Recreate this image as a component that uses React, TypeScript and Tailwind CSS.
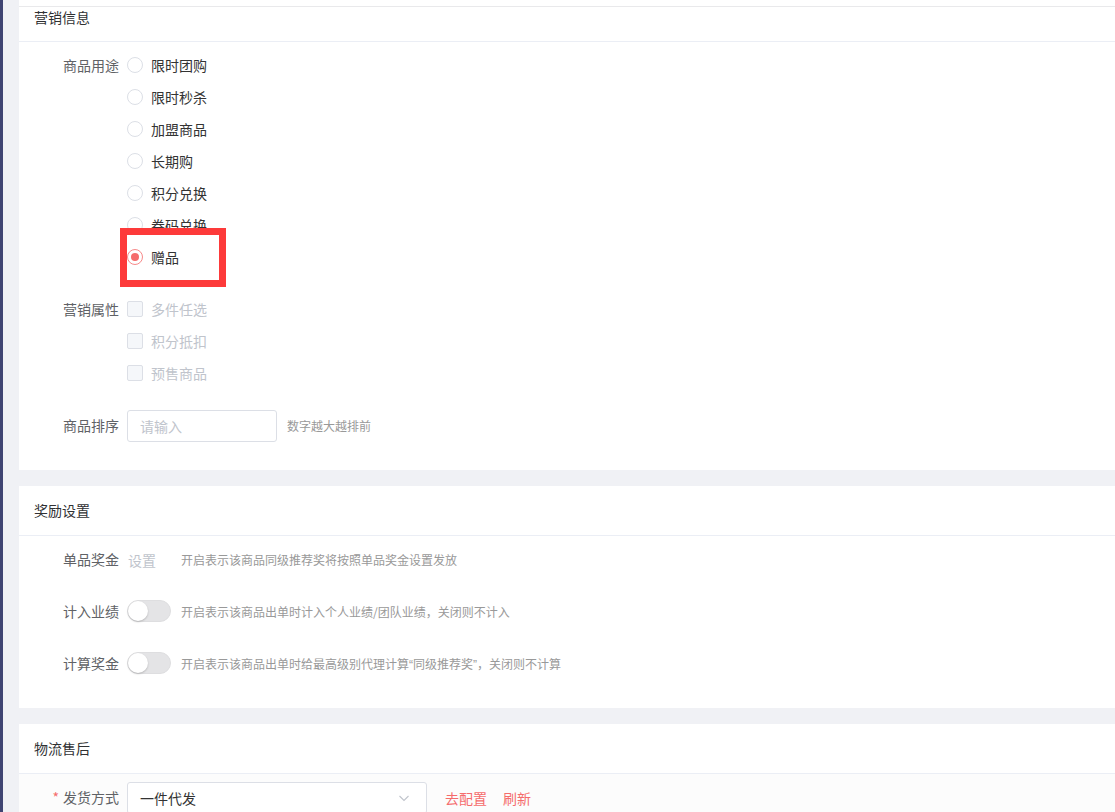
import type { ReactNode } from 'react';

const FONT = '"Noto Sans CJK SC", "Noto Sans", "Liberation Sans", sans-serif';

const PURPOSES = ['限时团购', '限时秒杀', '加盟商品', '长期购', '积分兑换', '券码兑换', '赠品'];
const ATTRS = ['多件任选', '积分抵扣', '预售商品'];

function FormRow({ label, required, children }: { label: string; required?: boolean; children: ReactNode }) {
  return (
    <div className="flex items-start">
      <div className="w-[108px] shrink-0 pr-2 text-right h-8 leading-[31px] text-[14px] text-[#606266]">
        {required && <span className="text-[#f56c6c] mr-1">*</span>}
        {label}
      </div>
      <div className="flex-1">{children}</div>
    </div>
  );
}

function Radio({ label, checked }: { label: string; checked?: boolean }) {
  return (
    <div className="h-8 flex items-center gap-2">
      <span
        className={`w-4 h-4 rounded-full border flex items-center justify-center bg-white -translate-y-px ${
          checked ? 'border-[#f78989]' : 'border-[#dcdfe6]'
        }`}
      >
        {checked && <span className="w-2 h-2 rounded-full bg-[#f56c6c]" />}
      </span>
      <span className="text-[14px] text-[#333333] leading-[30px] -translate-y-px">{label}</span>
    </div>
  );
}

function Checkbox({ label }: { label: string }) {
  return (
    <div className="h-8 flex items-center gap-2">
      <span className="w-4 h-4 rounded-[2px] border border-[#dcdfe6] bg-[#f5f7fa] -translate-y-px" />
      <span className="text-[14px] text-[#c0c4cc] leading-[30px] -translate-y-px">{label}</span>
    </div>
  );
}

function Switch() {
  return (
    <span className="relative inline-block w-[44px] h-[22px] rounded-full bg-[#e4e4e6] border border-[#dedee0] -translate-y-px">
      <span className="absolute left-0 top-0 w-[20px] h-[20px] rounded-full bg-white shadow-[0_1px_2px_rgba(0,0,0,0.2)]" />
    </span>
  );
}

function CardHeader({ title }: { title: string }) {
  return (
    <div className="h-[50px] border-b border-[#ebeef5] pl-[15px] flex items-center text-[14px] leading-[20px] pb-px text-[#303133]">
      {title}
    </div>
  );
}

function Hint({ children, className = '' }: { children: ReactNode; className?: string }) {
  return <span className={`text-[12px] text-[#999999] ${className}`}>{children}</span>;
}

function Quote({ children }: { children: ReactNode }) {
  return <span style={{ fontFamily: '"Liberation Sans", sans-serif' }}>{children}</span>;
}

export default function App() {
  return (
    <div className="flex min-h-screen bg-[#f0f1f5] overflow-hidden" style={{ fontFamily: FONT }}>
      <div className="w-[3px] shrink-0 bg-[#3f4472]" />
      <div className="flex-1 pl-4 flex flex-col gap-4">
        {/* 营销信息 */}
        <section className="relative bg-white">
          <div className="h-[7px] border-b border-[#e9e9eb]" />
          <div className="h-[35px] border-b border-[#ebeef5] pl-[15px] text-[14px] leading-[21px] text-[#303133]">
            营销信息
          </div>
          <div className="pt-2 pb-[28px] flex flex-col gap-5">
            <FormRow label="商品用途">
              <div className="flex flex-col">
                {PURPOSES.map((p) => (
                  <Radio key={p} label={p} checked={p === '赠品'} />
                ))}
              </div>
            </FormRow>
            <FormRow label="营销属性">
              <div className="flex flex-col">
                {ATTRS.map((a) => (
                  <Checkbox key={a} label={a} />
                ))}
              </div>
            </FormRow>
            <FormRow label="商品排序">
              <div className="flex items-center">
                <div className="w-[150px] h-8 border border-[#dcdfe6] rounded-[3px] pl-3 flex items-center text-[14px] leading-[31px] text-[#c0c4cc]">
                  请输入
                </div>
                <Hint className="ml-[10px]">数字越大越排前</Hint>
              </div>
            </FormRow>
          </div>
          {/* annotation box */}
          <div className="absolute left-[101px] top-[228px] w-[106px] h-[59px] border-[7px] border-[#fd3a3a]" />
        </section>

        {/* 奖励设置 */}
        <section className="bg-white">
          <CardHeader title="奖励设置" />
          <div className="pt-2 pb-[28px] flex flex-col gap-5">
            <FormRow label="单品奖金">
              <div className="h-8 flex items-center">
                <span className="text-[14px] text-[#c0c4cc] ml-px">设置</span>
                <Hint className="ml-[25px]">开启表示该商品同级推荐奖将按照单品奖金设置发放</Hint>
              </div>
            </FormRow>
            <FormRow label="计入业绩">
              <div className="h-8 flex items-center">
                <Switch />
                <Hint className="ml-[10px]">开启表示该商品出单时计入个人业绩/团队业绩，关闭则不计入</Hint>
              </div>
            </FormRow>
            <FormRow label="计算奖金">
              <div className="h-8 flex items-center">
                <Switch />
                <Hint className="ml-[10px]">
                  开启表示该商品出单时给最高级别代理计算<Quote>“</Quote>同级推荐奖<Quote>”</Quote>，关闭则不计算
                </Hint>
              </div>
            </FormRow>
          </div>
        </section>

        {/* 物流售后 */}
        <section className="bg-white">
          <CardHeader title="物流售后" />
          <div className="pt-2 pb-[28px] flex flex-col gap-5 bg-[#fcfcfc]">
            <FormRow label="发货方式" required>
              <div className="flex items-center">
                <div className="w-[300px] h-8 border border-[#dcdfe6] rounded-[3px] pl-3 pr-3 flex items-center justify-between bg-white">
                  <span className="text-[14px] text-[#333333]">一件代发</span>
                  <svg width="12" height="12" viewBox="0 0 12 12" fill="none" className="mr-[4px]">
                    <path d="M1.5 4l4.5 4.5L10.5 4" stroke="#c0c4cc" strokeWidth="1.1" />
                  </svg>
                </div>
                <span className="ml-[18px] text-[14px] text-[#f56c6c]">去配置</span>
                <span className="ml-4 text-[14px] text-[#f56c6c]">刷新</span>
              </div>
            </FormRow>
          </div>
        </section>
      </div>
    </div>
  );
}
